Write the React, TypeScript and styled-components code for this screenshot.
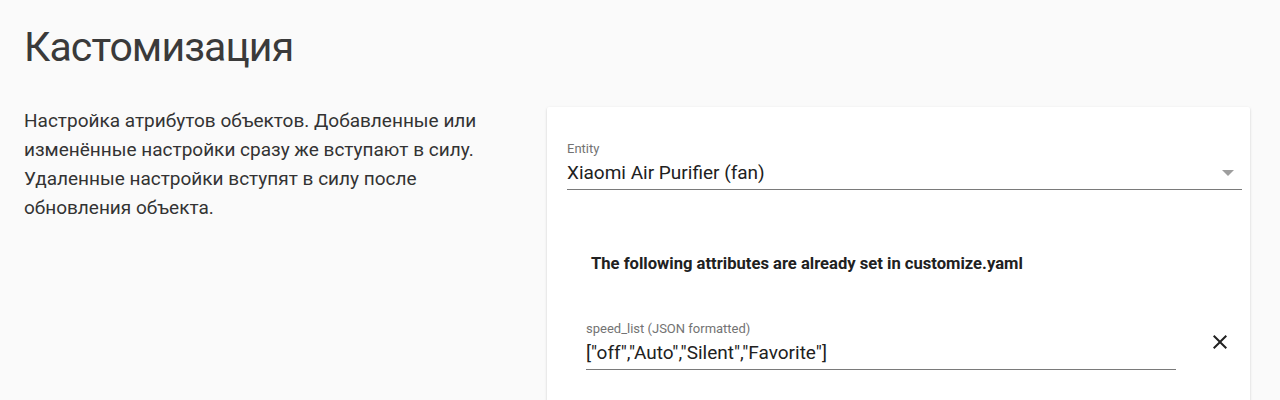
import React from "react";
import styled, { createGlobalStyle } from "styled-components";

const Global = createGlobalStyle`
  html, body { margin: 0; padding: 0; background: #fafafa; }
  body { font-family: Roboto, "Noto Sans", sans-serif; -webkit-font-smoothing: antialiased; }
`;

const Page = styled.div`
  width: 1280px;
  height: 400px;
  overflow: hidden;
  background: #fafafa;
  box-sizing: border-box;
  padding: 22px 30px 0 24px;
`;

const Title = styled.h1`
  margin: 0;
  font-size: 41px;
  letter-spacing: -0.9px;
  font-weight: 400;
  color: #3a3a3a;
  line-height: 50px;
`;

const Columns = styled.div`
  display: flex;
  align-items: flex-start;
  margin-top: 35px;
`;

const Intro = styled.p`
  margin: -1px 53px 0 0;
  width: 470px;
  font-size: 19px;
  line-height: 29px;
  color: #333;
`;

const Card = styled.div`
  flex: 1;
  background: #fff;
  border-radius: 2px;
  box-shadow: 0 1px 3px rgba(0, 0, 0, 0.12), 0 1px 2px rgba(0, 0, 0, 0.08);
  padding: 32px 8px 40px 20px;
  height: 300px;
`;

const Field = styled.div<{ $width?: string }>`
  position: relative;
  width: ${(p) => p.$width || "100%"};
  border-bottom: 1px solid #7a7a7a;
  padding-bottom: 2px;
`;

const Label = styled.div`
  font-size: 13px;
  color: #737373;
  line-height: 20px;
`;

const Value = styled.div`
  font-size: 19px;
  color: #212121;
  line-height: 28px;
`;

const Arrow = styled.span`
  position: absolute;
  right: 8px;
  top: 31px;
  width: 0;
  height: 0;
  border-left: 6px solid transparent;
  border-right: 6px solid transparent;
  border-top: 6px solid #9e9e9e;
`;

const Notice = styled.div`
  margin: 64px 0 0 24px;
  font-size: 16.6px;
  line-height: 19px;
  font-weight: 700;
  color: #212121;
`;

const AttrRow = styled.div`
  display: flex;
  align-items: center;
  margin: 46px 0 0 19px;
`;

const CloseBtn = styled.button`
  margin: 0 0 6px 32px;
  background: none;
  border: 0;
  padding: 0;
  display: flex;
  color: #212121;
`;

export default function App() {
  return (
    <Page>
      <Global />
      <Title>Кастомизация</Title>
      <Columns>
        <Intro>
          Настройка атрибутов объектов. Добавленные или изменённые настройки
          сразу же вступают в силу. Удаленные настройки вступят в силу после
          обновления объекта.
        </Intro>
        <Card>
          <Field>
            <Label>Entity</Label>
            <Value>Xiaomi Air Purifier (fan)</Value>
            <Arrow />
          </Field>
          <Notice>The following attributes are already set in customize.yaml</Notice>
          <AttrRow>
            <Field $width="590px">
              <Label>speed_list (JSON formatted)</Label>
              <Value>["off","Auto","Silent","Favorite"]</Value>
            </Field>
            <CloseBtn aria-label="remove">
              <svg width="24" height="24" viewBox="0 0 24 24">
                <path
                  d="M19 6.41L17.59 5 12 10.59 6.41 5 5 6.41 10.59 12 5 17.59 6.41 19 12 13.41 17.59 19 19 17.59 13.41 12z"
                  fill="currentColor"
                />
              </svg>
            </CloseBtn>
          </AttrRow>
        </Card>
      </Columns>
    </Page>
  );
}
